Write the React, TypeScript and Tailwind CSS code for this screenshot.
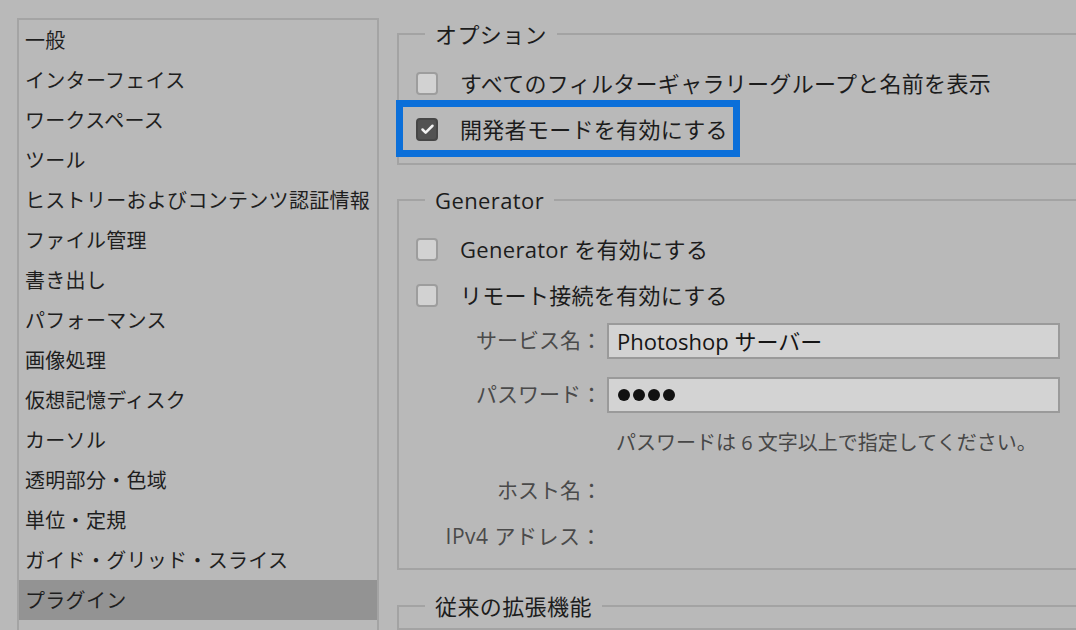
import { Check } from 'lucide-react'

const menuItems = [
  '一般',
  'インターフェイス',
  'ワークスペース',
  'ツール',
  'ヒストリーおよびコンテンツ認証情報',
  'ファイル管理',
  '書き出し',
  'パフォーマンス',
  '画像処理',
  '仮想記憶ディスク',
  'カーソル',
  '透明部分・色域',
  '単位・定規',
  'ガイド・グリッド・スライス',
  'プラグイン',
]

function CheckBox({ checked }: { checked?: boolean }) {
  if (checked) {
    return (
      <div className="w-[22px] h-[23px] rounded-[4px] border-2 border-[#464646] bg-[#525252] flex items-center justify-center shrink-0">
        <Check size={15} strokeWidth={4} className="text-[#f2f2f2]" />
      </div>
    )
  }
  return <div className="w-[22px] h-[23px] rounded-[4px] border-2 border-[#9d9d9d] bg-[#d2d2d2] shrink-0" />
}

function CheckRow({ label, checked }: { label: string; checked?: boolean }) {
  return (
    <div className="h-[46px] flex items-center pl-[17px] gap-[22px]">
      <CheckBox checked={checked} />
      <span className="text-[22px] tracking-[0.3px] text-[#1c1c1c]">{label}</span>
    </div>
  )
}

function Legend({ children }: { children: string }) {
  return (
    <legend className="ml-[26px] px-[10px] text-[22px] tracking-[0.4px] leading-[30px] text-[#1c1c1c]">
      {children}
    </legend>
  )
}

export default function App() {
  return (
    <div className="w-[1076px] h-[630px] overflow-hidden bg-[#b9b9b9] flex font-['Open_Sans','Noto_Sans_CJK_JP',sans-serif]">
      {/* category list */}
      <div className="ml-[17px] mt-[18px] w-[362px] h-[640px] border-2 border-[#a4a4a4] shrink-0">
        {menuItems.map((item) => (
          <div
            key={item}
            className={
              'h-10 flex items-center pl-[6px] pt-[1px] text-[20px] tracking-[0.3px] text-[#1e1e1e] ' +
              (item === 'プラグイン' ? 'bg-[#939393]' : '')
            }
          >
            {item}
          </div>
        ))}
      </div>

      {/* settings */}
      <div className="ml-[18px] mt-[19px] flex-1 flex flex-col">
        <fieldset className="border-2 border-r-0 border-[#a3a3a3] pt-[11px] pb-[11px]">
          <Legend>オプション</Legend>
          <CheckRow label="すべてのフィルターギャラリーグループと名前を表示" />
          <div className="relative">
            <CheckRow label="開発者モードを有効にする" checked />
            <div className="absolute left-[-3px] top-[-6px] w-[344px] h-[57px] border-[7px] border-[#0b6fd9]" />
          </div>
        </fieldset>

        <fieldset className="mt-[20px] border-2 border-r-0 border-[#a3a3a3] pt-[11px] pb-[16px]">
          <Legend>Generator</Legend>
          <CheckRow label="Generator を有効にする" />
          <CheckRow label="リモート接続を有効にする" />

          <div className="mt-[5px] flex items-center h-[36px]">
            <span className="w-[203px] text-right text-[21px] text-[#4a4a4a]">サービス名：</span>
            <div className="ml-[5px] w-[453px] h-[36px] border-2 border-[#9a9a9a] bg-[#d3d3d3] flex items-center pl-[8px] text-[22px] text-[#151515]">
              Photoshop サーバー
            </div>
          </div>

          <div className="mt-[18px] flex items-center h-[36px]">
            <span className="w-[203px] text-right text-[21px] text-[#4a4a4a]">パスワード：</span>
            <div className="ml-[5px] w-[453px] h-[36px] border-2 border-[#9a9a9a] bg-[#d3d3d3] flex items-center pl-[9px] gap-[3px]">
              <div className="w-[12px] h-[12px] rounded-full bg-[#111]" />
              <div className="w-[12px] h-[12px] rounded-full bg-[#111]" />
              <div className="w-[12px] h-[12px] rounded-full bg-[#111]" />
              <div className="w-[12px] h-[12px] rounded-full bg-[#111]" />
            </div>
          </div>

          <div className="mt-[15px] h-[30px] flex items-center pl-[217px] text-[20px] text-[#474747]">
            パスワードは 6 文字以上で指定してください。
          </div>

          <div className="mt-[18px] h-[30px] flex items-center">
            <span className="w-[203px] text-right text-[21px] text-[#4a4a4a]">ホスト名：</span>
          </div>
          <div className="mt-[16px] h-[30px] flex items-center">
            <span className="w-[203px] text-right text-[21px] tracking-[0.5px] text-[#4a4a4a]">IPv4 アドレス：</span>
          </div>
        </fieldset>

        <fieldset className="mt-[21px] border-2 border-r-0 border-[#a3a3a3] h-[80px]">
          <Legend>従来の拡張機能</Legend>
        </fieldset>
      </div>
    </div>
  )
}
